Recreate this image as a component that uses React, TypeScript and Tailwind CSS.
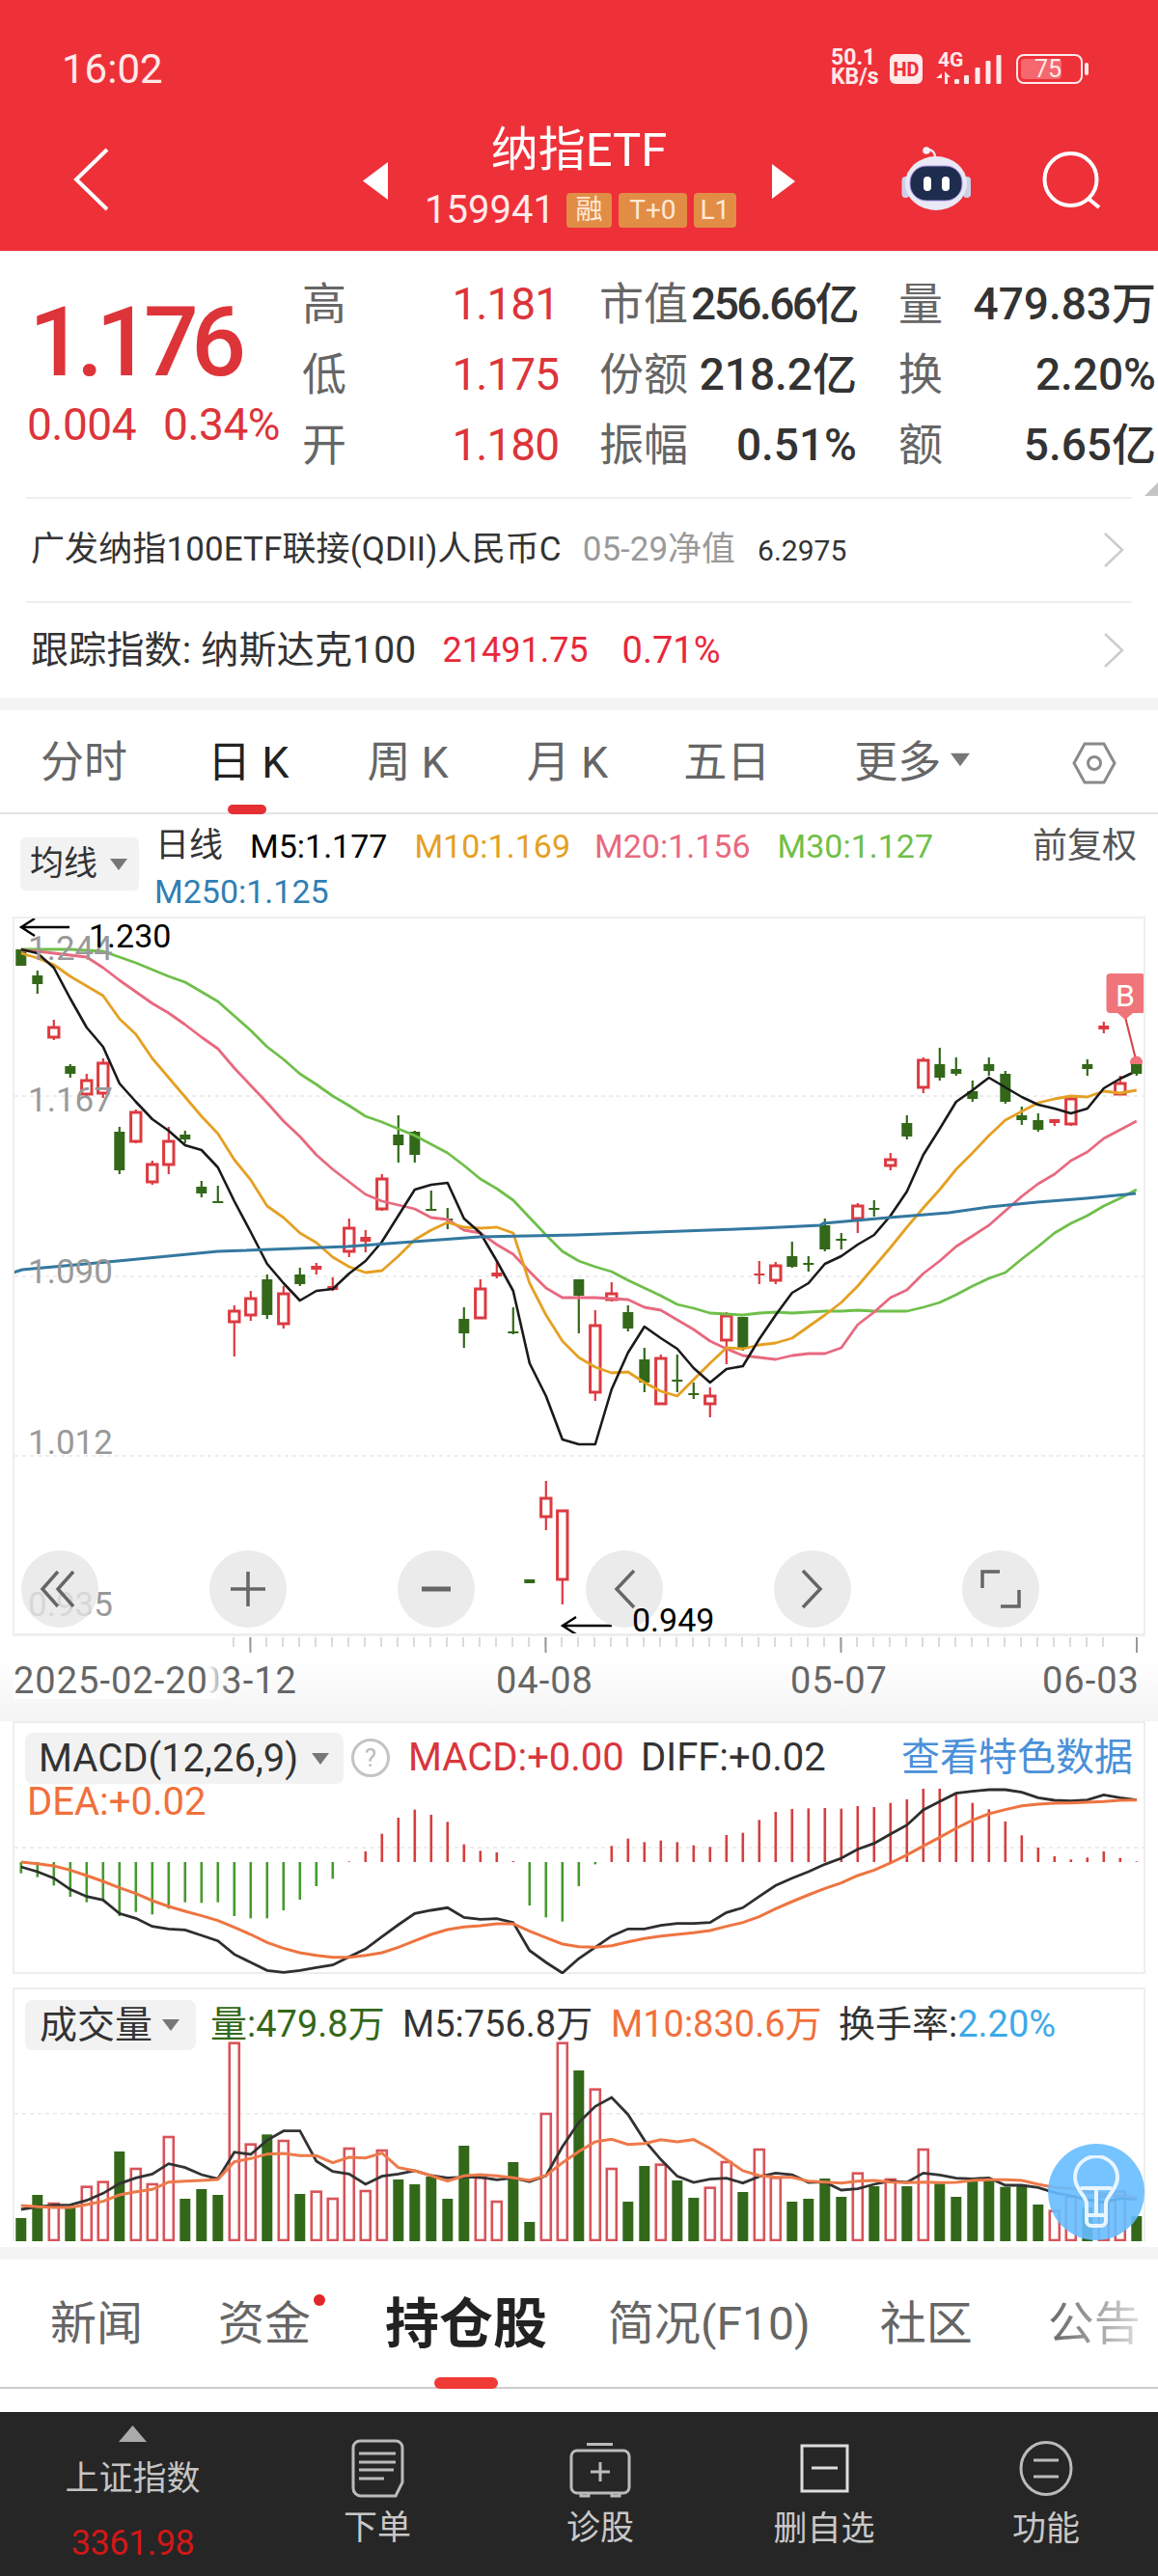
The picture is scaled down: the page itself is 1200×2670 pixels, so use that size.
const X = (i: number) => 21.8 + 17 * i;

// candles: [high, bodyTop, bodyBottom, low, up?]
const candles: [number, number, number, number, number][] = [
  [984, 984, 1001, 1001, 0], [1006, 1011, 1020, 1030, 0], [1057, 1065, 1075, 1078, 1], [1103, 1105, 1113, 1117, 0],
  [1113, 1120, 1134, 1137, 1], [1097, 1102, 1133, 1138, 1], [1168, 1173, 1213, 1217, 0], [1150, 1153, 1183, 1185, 1],
  [1203, 1207, 1225, 1228, 1], [1168, 1183, 1207, 1217, 1], [1172, 1176, 1181, 1185, 0], [1224, 1230, 1237, 1241, 0],
  [1229, 1245, 1247, 1247, 0], [1353, 1359, 1370, 1406, 1], [1338, 1346, 1363, 1369, 1], [1321, 1326, 1363, 1367, 0],
  [1333, 1341, 1372, 1377, 1], [1314, 1321, 1331, 1333, 0], [1309, 1312, 1316, 1321, 1], [1324, 1333, 1337, 1338, 1],
  [1263, 1273, 1297, 1303, 1], [1275, 1282, 1287, 1298, 1], [1217, 1222, 1253, 1255, 1], [1156, 1176, 1187, 1205, 0],
  [1172, 1173, 1197, 1205, 0], [1234, 1253, 1255, 1255, 0], [1252, 1263, 1265, 1274, 0], [1355, 1367, 1382, 1397, 0],
  [1326, 1336, 1366, 1367, 1], [1307, 1319, 1323, 1325, 1], [1355, 1380, 1381, 1383, 0], [1637, 1637, 1641, 1641, 0],
  [1535, 1553, 1572, 1586, 1], [1566, 1566, 1637, 1663, 1], [1326, 1326, 1343, 1382, 0], [1358, 1374, 1443, 1452, 1],
  [1329, 1341, 1347, 1349, 1], [1353, 1360, 1377, 1380, 0], [1397, 1409, 1433, 1443, 0], [1404, 1408, 1455, 1456, 1],
  [1404, 1430, 1432, 1443, 0], [1433, 1444, 1445, 1450, 0], [1438, 1447, 1455, 1469, 1], [1360, 1364, 1389, 1414, 1],
  [1365, 1365, 1397, 1400, 0], [1307, 1320, 1322, 1331, 1], [1308, 1312, 1327, 1331, 1], [1287, 1302, 1313, 1314, 0],
  [1302, 1309, 1311, 1318, 0], [1263, 1270, 1295, 1297, 0], [1278, 1284, 1286, 1295, 0], [1247, 1250, 1263, 1278, 1],
  [1244, 1252, 1254, 1261, 0], [1195, 1202, 1208, 1213, 1], [1156, 1164, 1178, 1181, 0], [1096, 1099, 1127, 1133, 1],
  [1086, 1103, 1117, 1120, 0], [1096, 1108, 1113, 1115, 0], [1120, 1131, 1139, 1142, 0], [1096, 1103, 1110, 1115, 0],
  [1110, 1113, 1142, 1144, 0], [1147, 1156, 1161, 1166, 0], [1154, 1161, 1171, 1173, 0], [1160, 1160, 1164, 1167, 1],
  [1137, 1139, 1165, 1167, 1], [1098, 1103, 1108, 1115, 0], [1059, 1063, 1067, 1071, 1], [1115, 1123, 1134, 1135, 1],
  [1100, 1103, 1113, 1115, 0],
];

const m5 = [984, 988, 1003, 1035, 1065, 1085, 1123, 1142, 1160, 1172, 1187, 1192, 1210, 1245, 1277, 1310, 1330, 1348, 1338, 1336, 1320, 1307, 1287, 1260, 1233, 1228, 1226, 1263, 1278, 1307, 1338, 1413, 1447, 1492, 1497, 1497, 1440, 1402, 1375, 1387, 1398, 1418, 1433, 1419, 1416, 1388, 1363, 1340, 1330, 1310, 1302, 1290, 1280, 1260, 1235, 1197, 1170, 1142, 1130, 1117, 1127, 1137, 1145, 1149, 1154, 1149, 1128, 1118, 1110];
const m10 = [988, 993, 1000, 1012, 1022, 1032, 1056, 1072, 1097, 1117, 1137, 1157, 1175, 1202, 1223, 1250, 1262, 1278, 1288, 1303, 1313, 1319, 1317, 1302, 1285, 1275, 1267, 1272, 1273, 1272, 1278, 1330, 1363, 1390, 1407, 1417, 1423, 1422, 1433, 1442, 1447, 1430, 1413, 1397, 1398, 1394, 1392, 1387, 1375, 1363, 1350, 1333, 1313, 1293, 1272, 1252, 1233, 1212, 1195, 1177, 1161, 1152, 1143, 1139, 1136, 1137, 1131, 1133, 1130];
const m20 = [985, 986, 988, 990, 992, 1003, 1016, 1028, 1040, 1050, 1062, 1075, 1087, 1107, 1125, 1143, 1162, 1178, 1197, 1212, 1225, 1238, 1245, 1249, 1253, 1262, 1264, 1275, 1278, 1290, 1300, 1318, 1335, 1345, 1345, 1345, 1346, 1347, 1355, 1358, 1368, 1378, 1390, 1398, 1405, 1407, 1409, 1405, 1403, 1403, 1397, 1373, 1360, 1345, 1337, 1320, 1307, 1292, 1281, 1270, 1255, 1240, 1227, 1217, 1203, 1194, 1180, 1171, 1162];
const m30 = [984, 984, 984, 984, 985, 986, 992, 998, 1005, 1012, 1018, 1028, 1038, 1053, 1068, 1085, 1098, 1113, 1124, 1136, 1146, 1157, 1163, 1170, 1177, 1186, 1195, 1208, 1222, 1232, 1244, 1262, 1280, 1297, 1307, 1313, 1318, 1327, 1335, 1343, 1352, 1356, 1361, 1362, 1363, 1361, 1360, 1361, 1360, 1359, 1359, 1358, 1359, 1359, 1359, 1355, 1350, 1342, 1333, 1325, 1319, 1305, 1292, 1278, 1268, 1260, 1250, 1242, 1233];
const m250Pts = "14,1319 23,1316 122,1307 226,1297 360,1292 497,1282 597,1280 735,1275 788,1273 850,1270 853,1268 921,1262 983,1257 1025,1251 1075,1246 1126,1242 1177,1237";

const zones: [string, number[], string, string][] = [
  ["#6fbf4a", m30, "m30", "2.8"], ["#e8697f", m20, "m20", "2.8"], ["#e5a023", m10, "m10", "2.8"], ["#1a1a1a", m5, "m5", "2.6"],
];

const macdBars = [515, 527, 553, 588, 605, 600, 648, 635, 643, 625, 605, 607, 605, 648, 655, 655, 630, 597, 555, 532, 478, 447, 392, 342, 317, 333, 355, 425, 445, 450, 477, 615, 652, 665, 555, 487, 430, 407, 418, 413, 418, 428, 433, 396, 389, 349, 324, 315, 313, 312, 314, 306, 309, 296, 285, 252, 252, 265, 296, 316, 354, 397, 435, 462, 472, 466, 447, 467, 478];
const diff = [495, 510, 530, 565, 587, 598, 640, 655, 680, 688, 691, 708, 725, 767, 792, 817, 823, 817, 808, 800, 775, 750, 712, 675, 640, 630, 622, 652, 658, 656, 668, 755, 792, 825, 780, 745, 710, 688, 688, 677, 671, 671, 668, 637, 622, 587, 553, 530, 510, 487, 468, 440, 422, 393, 365, 318, 292, 266, 260, 255, 255, 263, 280, 288, 290, 287, 271, 280, 287];
const dea = [480, 485, 492, 505, 522, 540, 560, 578, 600, 618, 633, 647, 662, 683, 705, 730, 748, 762, 770, 776, 776, 770, 762, 745, 725, 705, 690, 682, 678, 672, 672, 695, 715, 735, 743, 745, 740, 728, 718, 710, 705, 700, 693, 680, 668, 650, 625, 603, 582, 562, 545, 522, 505, 483, 458, 430, 403, 375, 350, 330, 317, 305, 300, 297, 296, 294, 292, 288, 287];

// volume bars: [top, up?]
const vol: [number, number][] = [[747, 0], [675, 0], [702, 1], [712, 0], [650, 1], [635, 1], [540, 0], [594, 1], [642, 1], [495, 1], [687, 0], [657, 0], [675, 0], [203, 1], [518, 1], [487, 0], [507, 1], [672, 0], [665, 1], [687, 1], [531, 1], [663, 1], [537, 1], [627, 0], [642, 0], [618, 0], [687, 0], [522, 0], [622, 1], [696, 1], [573, 0], [759, 0], [423, 1], [203, 1], [288, 0], [347, 1], [594, 1], [696, 0], [585, 0], [581, 1], [630, 0], [684, 0], [653, 1], [573, 1], [666, 0], [534, 1], [622, 1], [696, 0], [687, 0], [624, 0], [681, 0], [608, 1], [648, 0], [627, 1], [648, 0], [534, 1], [640, 0], [681, 0], [630, 0], [630, 0], [650, 0], [648, 0], [705, 0], [725, 1], [680, 1], [715, 0], [680, 1], [665, 1], [741, 0]];
const volM5 = [720, 712, 707, 706, 692, 670, 640, 622, 610, 578, 590, 612, 625, 542, 549, 505, 476, 476, 570, 602, 610, 642, 617, 610, 600, 615, 622, 620, 620, 628, 622, 634, 615, 525, 450, 400, 372, 425, 505, 565, 617, 636, 626, 623, 638, 618, 607, 612, 636, 635, 660, 656, 642, 632, 636, 607, 613, 623, 625, 622, 645, 645, 652, 668, 678, 690, 698, 686, 688];
const volM10 = [708, 712, 714, 714, 705, 695, 675, 665, 658, 635, 632, 630, 627, 572, 562, 548, 546, 553, 553, 575, 558, 560, 545, 590, 600, 615, 632, 616, 612, 616, 622, 630, 615, 575, 540, 510, 502, 518, 515, 503, 510, 503, 530, 565, 600, 615, 620, 620, 632, 635, 638, 632, 630, 635, 637, 635, 637, 636, 630, 628, 628, 630, 642, 652, 655, 665, 672, 678, 685];

const pts = (ys: number[], base = 0, div = 1) => ys.map((y, i) => `${X(i)},${base + y / div}`).join(" ");

function Candles() {
  return (
    <>
      {candles.map(([hi, top, bot, lo, up], i) => {
        const c = up ? "#dc3a40" : "#33681a";
        const small = up && bot - top < 6;
        return (
          <g key={i}>
            <line x1={X(i)} x2={X(i)} y1={hi} y2={lo} stroke={c} strokeWidth="2.2" />
            {up && !small ? (
              <rect x={X(i) - 5.2} y={top} width="10.4" height={bot - top} fill="#fff" stroke={c} strokeWidth="3" />
            ) : (
              <rect x={X(i) - 5.5} y={top} width="11" height={Math.max(bot - top, 2)} fill={c} />
            )}
          </g>
        );
      })}
    </>
  );
}

function MainChart() {
  return (
    <svg className="absolute -left-[2px] -top-[2px] h-[746px] w-[1174px]" viewBox="13 950 1174 746">
      {[1136, 1323, 1509].map((y) => (
        <line key={y} x1="15" x2="1185" y1={y} y2={y} stroke="#e8e8e8" strokeWidth="1.5" strokeDasharray="4 4" />
      ))}
      <Candles />
      {zones.map(([c, ys, k, w]) => (
        <polyline key={k} points={pts(ys)} fill="none" stroke={c} strokeWidth={w} strokeLinejoin="round" />
      ))}
      <polyline points={m250Pts} fill="none" stroke="#33789f" strokeWidth="3" />
      {/* arrows for high/low */}
      <path d="M72 961H23M36 952l-14 9 14 9" fill="none" stroke="#000" strokeWidth="2.4" />
      <path d="M634 1685H584M597 1676l-14 9 14 9" fill="none" stroke="#000" strokeWidth="2.4" />
      {/* B marker */}
      <line x1="1166" y1="1054" x2="1177.5" y2="1100" stroke="#d0454a" strokeWidth="2" />
      <circle cx="1177.5" cy="1101" r="6.5" fill="#f0757a" />
      <rect x="1172" y="1103" width="11" height="10" fill="#33681a" />
      <path d="M1158 1050h16l-8 7z" fill="#f0757a" />
      <rect x="1146.5" y="1009" width="40" height="41" rx="4" fill="#f0757a" />
    </svg>
  );
}

function ChartButton({ children }: { children: React.ReactNode }) {
  return (
    <div className="flex h-[80px] w-[80px] items-center justify-center rounded-full bg-[#e6e6e6]/80">
      <svg className="h-[44px] w-[44px]" viewBox="0 0 44 44" fill="none" stroke="#666" strokeWidth="3.5">
        {children}
      </svg>
    </div>
  );
}

function MainPanel() {
  return (
    <div className="relative mx-[13px] h-[746px] w-[1174px] overflow-hidden border-2 border-b-[3px] border-[#eeeeee] text-[35px] leading-[36px] text-[#999999]">
      <MainChart />
      <span className="absolute left-[14px] top-[14px]">1.244</span>
      <span className="absolute left-[14px] top-[171px]">1.167</span>
      <span className="absolute left-[14px] top-[349px]">1.090</span>
      <span className="absolute left-[14px] top-[526px]">1.012</span>
      <span className="absolute left-[14px] top-[694px]">0.935</span>
      <span className="absolute left-[77px] top-[1px] text-[34px] leading-[34px] text-black">1.230</span>
      <span className="absolute left-[1131px] top-[59px] flex h-[41px] w-[40px] items-center justify-center text-[32px] leading-[32px] text-white">B</span>
      <div className="absolute left-[7px] top-[655px] flex gap-[115px]">
        <ChartButton>
          <path d="M20 4 4 22l16 18M36 4 20 22l16 18" />
        </ChartButton>
        <ChartButton>
          <path d="M22 4v36M4 22h36" />
        </ChartButton>
        <ChartButton>
          <path d="M7 22h30" strokeWidth="5" />
        </ChartButton>
        <ChartButton>
          <path d="M32 3 14 22l18 19" />
        </ChartButton>
        <ChartButton>
          <path d="M12 3l18 19-18 19" />
        </ChartButton>
        <ChartButton>
          <path d="M21 4H3v17M22 40h19V23" />
        </ChartButton>
      </div>
      <span className="absolute left-[640px] top-[710px] text-[34px] leading-[34px] text-black">0.949</span>
    </div>
  );
}

function Axis() {
  const ticks = Array.from({ length: 54 }, (_, i) => 242 + 17 * i);
  return (
    <div className="relative h-[88px] bg-gradient-to-b from-white from-30% to-[#f4f4f4] text-[38px] leading-[38px] tracking-[1px] text-[#666666]">
      <svg className="absolute left-0 top-0 h-[20px] w-[1200px]" viewBox="0 0 1200 20">
        {ticks.map((x) => (
          <line key={x} x1={x} x2={x} y1="1" y2="11" stroke="#cfcfcf" strokeWidth="1.5" />
        ))}
        {[259.5, 565.5, 871.5, 1178].map((x) => (
          <line key={x} x1={x} x2={x} y1="1" y2="17" stroke="#999" strokeWidth="2" />
        ))}
      </svg>
      <span className="absolute left-[207px] top-[27px]">03-12</span>
      <span className="absolute left-[14px] top-[27px] bg-gradient-to-r from-white from-90% to-transparent pr-[22px]">2025-02-20</span>
      <span className="absolute left-[514px] top-[27px]">04-08</span>
      <span className="absolute left-[819px] top-[27px]">05-07</span>
      <span className="absolute left-[1080px] top-[27px]">06-03</span>
    </div>
  );
}

function Caret({ className }: { className: string }) {
  return (
    <svg className={className} viewBox="0 0 18 12">
      <path d="M0 0h18L9 12z" fill="#777" />
    </svg>
  );
}

function MacdPanel() {
  return (
    <div className="relative mx-[13px] h-[262px] w-[1174px] border-2 border-[#eeeeee] text-[40px] leading-[42px]">
      <svg className="absolute -left-[2px] -top-[2px] h-[262px] w-[1174px]" viewBox="13 1784 1174 262">
        <line x1="15" x2="1185" y1="1915" y2="1915" stroke="#e8e8e8" strokeWidth="1.5" strokeDasharray="4 4" />
        {macdBars.map((y, i) => {
          const t = 1770 + y / 3;
          const up = t < 1930;
          return (
            <line key={i} x1={X(i)} x2={X(i)} y1="1930" y2={t} stroke={up ? "#d4403f" : "#47992f"} strokeWidth="2.6" />
          );
        })}
        <polyline points={pts(diff, 1770, 3)} fill="none" stroke="#2e2e2e" strokeWidth="2.8" />
        <polyline points={pts(dea, 1770, 3)} fill="none" stroke="#ee7440" strokeWidth="3" />
      </svg>
      <div className="absolute left-[11px] top-[10px] flex h-[53px] w-[330px] items-center rounded-lg bg-[#f2f2f2] pl-[14px] text-[#333333]">
        <span>MACD(12,26,9)</span>
        <Caret className="ml-[14px] h-[12px] w-[18px]" />
      </div>
      <div className="absolute left-[349px] top-[16px] flex h-[40px] w-[40px] items-center justify-center rounded-full border-[3px] border-[#c4c4c4] text-[26px] leading-[26px] text-[#bbbbbb]">?</div>
      <span className="absolute left-[408px] top-[15px] text-[#d9363c]">MACD:+0.00</span>
      <span className="absolute left-[649px] top-[15px] text-[#333333]">DIFF:+0.02</span>
      <span className="absolute left-[919px] top-[15px] text-[#4a90d9]">查看特色数据</span>
      <span className="absolute left-[13px] top-[61px] text-[#f0703c]">DEA:+0.02</span>
    </div>
  );
}

function VolumePanel() {
  return (
    <div className="relative mx-[13px] mt-[14px] h-[263px] w-[1174px] border-x-2 border-t-2 border-[#eeeeee] text-[38px] leading-[42px]">
      <svg className="absolute -left-[2px] -top-[2px] h-[263px] w-[1174px]" viewBox="13 2060 1174 263">
        <line x1="15" x2="1185" y1="2190.7" y2="2190.7" stroke="#e8e8e8" strokeWidth="1.5" strokeDasharray="4 4" />
        {vol.map(([y, up], i) => {
          const t = 2050 + y / 3;
          return up ? (
            <rect key={i} x={X(i) - 5} y={t} width="10" height={2322 - t} fill="#fff" stroke="#d9535a" strokeWidth="2.6" />
          ) : (
            <rect key={i} x={X(i) - 5.5} y={t} width="11" height={2323 - t} fill="#33681a" />
          );
        })}
        <polyline points={pts(volM5, 2050, 3)} fill="none" stroke="#333" strokeWidth="2.8" />
        <polyline points={pts(volM10, 2050, 3)} fill="none" stroke="#ee7a4a" strokeWidth="3" />
      </svg>
      <div className="absolute left-[11px] top-[11px] flex h-[52px] w-[177px] items-center rounded-lg bg-[#f2f2f2] pl-[15px] text-[#333333]">
        <span className="text-[39px]">成交量</span>
        <Caret className="ml-[10px] h-[12px] w-[18px]" />
      </div>
      <span className="absolute left-[203px] top-[15px] text-[#33681a]">量:479.8万</span>
      <span className="absolute left-[402px] top-[15px] text-[#333333]">M5:756.8万</span>
      <span className="absolute left-[618px] top-[15px] text-[#f0703c]">M10:830.6万</span>
      <span className="absolute left-[854px] top-[15px] text-[#333333]">
        换手率:<span className="text-[#3fa9e8]">2.20%</span>
      </span>
      <div className="absolute left-[1071px] top-[160px] flex h-[100px] w-[100px] items-center justify-center rounded-full bg-[#66bdff]/90">
        <svg className="h-[76px] w-[50px]" viewBox="0 0 50 76" fill="none" stroke="#e8f5ff" strokeWidth="4" strokeLinecap="round" strokeLinejoin="round">
          <path d="M15 50c0-8-12-14-12-27a22 22 0 0 1 44 0c0 13-12 19-12 27v18a5 5 0 0 1-5 5H20a5 5 0 0 1-5-5z" />
          <path d="M10 34h30M25 34v28M16 62h18" />
        </svg>
      </div>
    </div>
  );
}

function StatusBar() {
  return (
    <div className="relative h-[110px] text-[#ffe9e9]">
      <span className="absolute left-[64px] top-[47px] text-[42px] leading-[50px]">16:02</span>
      <div className="absolute left-[861px] top-[50px] flex flex-col font-bold text-[23px] leading-[20px]">
        <span>50.1</span>
        <span>KB/s</span>
      </div>
      <div className="absolute left-[922px] top-[56px] flex h-[31px] w-[34px] items-center justify-center rounded-md bg-[#ffe9e9] text-[20px] font-extrabold leading-[20px] text-[#ee3039]">HD</div>
      <span className="absolute left-[972px] top-[52px] text-[21px] font-bold leading-[20px]">4G</span>
      <svg className="absolute left-[966px] top-[54px] h-[36px] w-[76px]" viewBox="966 54 76 36" fill="#ffe9e9">
        <path d="M976 76l-6 5h6zM979 74l6 6h-3v7h-3z" />
        <rect x="989" y="82" width="5" height="5" rx="1" />
        <rect x="999" y="78" width="5" height="9" rx="1" />
        <rect x="1010.5" y="70" width="5" height="17" rx="1" />
        <rect x="1021.5" y="63" width="5" height="24" rx="1" />
        <rect x="1032.5" y="57" width="5" height="30" rx="1" />
      </svg>
      <div className="absolute left-[1053px] top-[56px] flex h-[31px] w-[69px] items-center rounded-lg border-2 border-[#ffe9e9] p-[3px]">
        <div className="relative flex h-[21px] w-[42px] items-center justify-end rounded-sm bg-[#f4686e] text-[25px] leading-[25px]">75</div>
      </div>
      <div className="absolute left-[1124px] top-[65px] h-[13px] w-[4px] rounded-full bg-[#ffe9e9]" />
    </div>
  );
}

function NavBar() {
  return (
    <div className="relative h-[150px] text-white">
      <svg className="absolute left-[75px] top-[43px] h-[66px] w-[40px]" viewBox="0 0 40 66" fill="none" stroke="#fff" strokeWidth="4">
        <path d="M36 2 4 33l32 31" />
      </svg>
      <svg className="absolute left-[376px] top-[58px] h-[39px] w-[26px]" viewBox="0 0 26 39">
        <path d="M26 0v39L0 19.5z" fill="#fff" />
      </svg>
      <svg className="absolute left-[800px] top-[60px] h-[36px] w-[24px]" viewBox="0 0 24 36">
        <path d="M0 0v36l24-18z" fill="#fff" />
      </svg>
      <div className="flex flex-col items-center pt-[18px]">
        <span className="text-[49px] leading-[56px]">纳指ETF</span>
        <div className="ml-[3px] mt-[14px] flex items-center">
          <span className="text-[40px] leading-[40px] text-[#ffeaea]">159941</span>
          <div className="ml-[12px] flex gap-[7px] text-[28px] leading-[36px] text-[#ffe9d6]">
            <span className="flex h-[36px] w-[47px] items-center justify-center rounded-sm bg-[#e28d46]">融</span>
            <span className="flex h-[36px] w-[71px] items-center justify-center rounded-sm bg-[#e28d46]">T+0</span>
            <span className="flex h-[36px] w-[44px] items-center justify-center rounded-sm bg-[#e28d46]">L1</span>
          </div>
        </div>
      </div>
      <svg className="absolute left-[932px] top-[40px] h-[70px] w-[76px]" viewBox="932 150 76 70">
        <path d="M969 163c0-5-3-8-8-8" fill="none" stroke="#e7e4f2" strokeWidth="2.5" />
        <circle cx="960" cy="156" r="3.8" fill="#f2f0fa" />
        <rect x="934.5" y="183" width="8" height="22" rx="4" fill="#cdd0e8" />
        <rect x="998" y="183" width="8" height="22" rx="4" fill="#cdd0e8" />
        <ellipse cx="970" cy="190" rx="32" ry="28" fill="#e9e9f6" />
        <rect x="943" y="172" width="54" height="36" rx="17" fill="#1e2c4e" stroke="#a893e0" strokeWidth="1" />
        <rect x="957" y="183" width="8" height="15" rx="4" fill="#fff" />
        <rect x="976" y="183" width="8" height="15" rx="4" fill="#fff" />
      </svg>
      <svg className="absolute left-[1078px] top-[45px] h-[62px] w-[64px]" viewBox="1078 155 64 62" fill="none" stroke="#fff" strokeWidth="4">
        <circle cx="1109.5" cy="186" r="27" />
        <path d="M1128 206l11 9" />
      </svg>
    </div>
  );
}

function QuoteRow({ label, value, label2, value2, label3, value3, squeeze }: { label: string; value: string; label2: string; value2: string; label3: string; value3: string; squeeze?: boolean }) {
  return (
    <div className="flex h-[73px] items-center">
      <div className="flex w-[266px] items-center justify-between">
        <span className="text-[46px] text-[#666666]">{label}</span>
        <span className="text-[46px] tracking-[-1px] text-[#dd343a]">{value}</span>
      </div>
      <div className="ml-[42px] flex w-[267px] items-center justify-between">
        <span className="text-[46px] text-[#666666]">{label2}</span>
        <span className={squeeze ? "text-[46px] font-medium tracking-[-2.5px] text-[#333333]" : "text-[46px] font-medium text-[#333333]"}>{value2}</span>
      </div>
      <div className="ml-[43px] flex w-[267px] items-center justify-between">
        <span className="text-[46px] text-[#666666]">{label3}</span>
        <span className="text-[46px] font-medium text-[#333333]">{value3}</span>
      </div>
    </div>
  );
}

function QuoteBlock() {
  return (
    <div className="relative flex h-[255px]">
      <div className="w-[313px] pl-[28px] pt-[40px] text-[#dd343a]">
        <div className="pl-[2px] text-[100px] font-medium leading-[110px] tracking-[-7.5px]">1.176</div>
        <div className="mt-[5px] flex gap-[28px] text-[46px] leading-[50px] tracking-[-0.5px]">
          <span>0.004</span>
          <span>0.34%</span>
        </div>
      </div>
      <div className="pt-[18px] leading-[60px]">
        <QuoteRow label="高" value="1.181" label2="市值" value2="256.66亿" label3="量" value3="479.83万" squeeze />
        <QuoteRow label="低" value="1.175" label2="份额" value2="218.2亿" label3="换" value3="2.20%" />
        <QuoteRow label="开" value="1.180" label2="振幅" value2="0.51%" label3="额" value3="5.65亿" />
      </div>
      <svg className="absolute bottom-[1px] right-0 h-[14px] w-[14px]" viewBox="0 0 14 14">
        <path d="M14 0v14H0z" fill="#c4c4c4" />
      </svg>
    </div>
  );
}

function InfoChevron() {
  return (
    <svg className="h-[36px] w-[22px]" viewBox="0 0 22 36" fill="none" stroke="#cccccc" strokeWidth="2.5">
      <path d="M2 1l18 17L2 35" />
    </svg>
  );
}

function InfoRows() {
  return (
    <div className="mx-[27px] w-[1146px]">
      <div className="flex h-[108px] items-center justify-between border-t-2 border-[#efefef] pl-[5px] pr-[8px]">
        <div className="flex items-center">
          <span className="text-[35px] tracking-[0.1px] text-[#333333]">广发纳指100ETF联接(QDII)人民币C</span>
          <span className="ml-[22px] text-[35px] text-[#999999]">05-29净值</span>
          <span className="ml-[23px] text-[30px] text-[#333333]">6.2975</span>
        </div>
        <InfoChevron />
      </div>
      <div className="flex h-[100px] items-center justify-between border-t-2 border-[#efefef] pl-[5px] pr-[8px]">
        <div className="flex items-center">
          <span className="text-[39px] tracking-[0.2px] text-[#333333]">跟踪指数: 纳斯达克100</span>
          <span className="ml-[27px] text-[36px] text-[#e8283a]">21491.75</span>
          <span className="ml-[35px] text-[38px] text-[#e8283a]">0.71%</span>
        </div>
        <InfoChevron />
      </div>
    </div>
  );
}

function PeriodTabs() {
  return (
    <div className="relative flex h-[108px] border-b-2 border-[#e4e4e4] pl-[42px] pt-[27px] text-[45px] leading-[56px] text-[#666666]">
      <span>分时</span>
      <span className="ml-[83px] text-[#222222]">日 K</span>
      <span className="ml-[81px]">周 K</span>
      <span className="ml-[81px]">月 K</span>
      <span className="ml-[78px]">五日</span>
      <span className="ml-[87px]">更多</span>
      <Caret className="ml-[10px] mt-[16px] h-[17px] w-[20px]" />
      <svg className="ml-[106px] mt-[5px] h-[46px] w-[46px]" viewBox="0 0 46 46" fill="none" stroke="#8a8a8a" strokeWidth="3">
        <path d="M13 3h20l11 20-11 20H13L2 23z" />
        <circle cx="23" cy="23" r="6.5" />
      </svg>
      <div className="absolute bottom-[-2px] left-[236px] h-[10px] w-[40px] rounded-full bg-[#e62f35]" />
    </div>
  );
}

function MaLegend() {
  return (
    <div className="relative h-[106px] text-[34px] leading-[40px]">
      <div className="absolute left-[21px] top-[24px] flex h-[55px] w-[123px] items-center rounded-md bg-[#f2f2f2] pl-[10px] text-[35px] text-[#333333]">
        <span>均线</span>
        <Caret className="ml-[13px] h-[12px] w-[18px]" />
      </div>
      <div className="absolute left-[161px] top-[13px] flex">
        <span className="text-[35px] text-[#333333]">日线</span>
        <span className="ml-[28px] text-black">M5:1.177</span>
        <span className="ml-[28px] text-[#e5a023]">M10:1.169</span>
        <span className="ml-[25px] text-[#e8697f]">M20:1.156</span>
        <span className="ml-[28px] text-[#6fbf4a]">M30:1.127</span>
      </div>
      <span className="absolute left-[1070px] top-[13px] text-[36px] text-[#555555]">前复权</span>
      <span className="absolute left-[160px] top-[60px] text-[#2f7fb5]">M250:1.125</span>
    </div>
  );
}

function BottomTabs() {
  return (
    <div className="relative flex h-[134px] items-center border-b-2 border-[#cccccc] pl-[52px] pt-[2px] text-[48px] leading-[60px] text-[#666666]">
      <span>新闻</span>
      <span className="ml-[78px]">资金</span>
      <div className="mb-[50px] ml-[3px] h-[12px] w-[12px] rounded-full bg-[#e0262c]" />
      <span className="ml-[62px] text-[56px] font-bold text-[#222222]">持仓股</span>
      <span className="ml-[63px]">简况(F10)</span>
      <span className="ml-[72px]">社区</span>
      <span className="ml-[78px] whitespace-nowrap bg-gradient-to-r from-[#666666] to-[#dddddd] bg-clip-text text-transparent">公告</span>
      <div className="absolute bottom-[-2px] left-[450px] h-[12px] w-[66px] rounded-full bg-[#f03a35]" />
    </div>
  );
}

function Dock() {
  return (
    <div className="relative mt-[24px] h-[170px] bg-[#262626] text-[35px] leading-[40px] text-[#c8c8c8]">
      <div className="absolute left-[57px] top-[14px] flex w-[161px] flex-col items-center">
        <svg className="h-[17px] w-[29px]" viewBox="0 0 29 17">
          <path d="M14.5 0 29 17H0z" fill="#aaaaaa" />
        </svg>
        <span className="mt-[17px] whitespace-nowrap text-[35px] leading-[44px] text-[#c4c4c4]">上证指数</span>
        <span className="mt-[24px] whitespace-nowrap text-[36px] leading-[40px] tracking-[-0.5px] text-[#d01818]">3361.98</span>
      </div>
      <div className="absolute left-[356px] top-[28px] flex w-[70px] flex-col items-center">
        <svg className="h-[61px] w-[55px]" viewBox="0 0 55 61" fill="none" stroke="#bbbbbb" strokeWidth="3">
          <path d="M10 2h36a7 7 0 0 1 7 7v36l-7 14H10a8 8 0 0 1-8-8V9a7 7 0 0 1 7-7z" />
          <path d="M8 15h38M8 24h38M8 32h36M8 41h26" />
        </svg>
        <span className="mt-[12px]">下单</span>
      </div>
      <div className="absolute left-[587px] top-[32px] flex w-[70px] flex-col items-center">
        <svg className="h-[57px] w-[64px]" viewBox="0 0 64 57" fill="none" stroke="#bbbbbb" strokeWidth="3">
          <path d="M18 1.5h27" />
          <rect x="2" y="8" width="60" height="44" rx="6" />
          <path d="M12 52v3h8v-3M44 52v3h8v-3" />
          <path d="M32 20v20M22 30h20" />
        </svg>
        <span className="mt-[12px]">诊股</span>
      </div>
      <div className="absolute left-[801px] top-[33px] flex w-[106px] flex-col items-center">
        <svg className="h-[51px] w-[51px]" viewBox="0 0 51 51" fill="none" stroke="#dddddd" strokeWidth="3">
          <rect x="2" y="2" width="47" height="47" />
          <path d="M12 25h27" />
        </svg>
        <span className="mt-[18px]">删自选</span>
      </div>
      <div className="absolute left-[1049px] top-[30px] flex w-[70px] flex-col items-center">
        <svg className="h-[57px] w-[56px]" viewBox="0 0 56 57" fill="none" stroke="#bbbbbb" strokeWidth="3">
          <ellipse cx="28" cy="28.5" rx="26" ry="27" />
          <path d="M15 20h26M15 37h26" />
        </svg>
        <span className="mt-[15px]">功能</span>
      </div>
    </div>
  );
}

export default function App() {
  return (
    <div className="h-[2670px] w-[1200px] overflow-hidden bg-white [font-family:Roboto,'Noto_Sans_CJK_SC',sans-serif]">
      <div className="h-[260px] bg-[#ee3039]">
        <StatusBar />
        <NavBar />
      </div>
      <QuoteBlock />
      <InfoRows />
      <div className="h-[13px] bg-[#f4f4f4]" />
      <PeriodTabs />
      <MaLegend />
      <MainPanel />
      <Axis />
      <MacdPanel />
      <VolumePanel />
      <div className="mt-[6px] h-[13px] bg-[#f4f4f4]" />
      <BottomTabs />
      <Dock />
    </div>
  );
}
